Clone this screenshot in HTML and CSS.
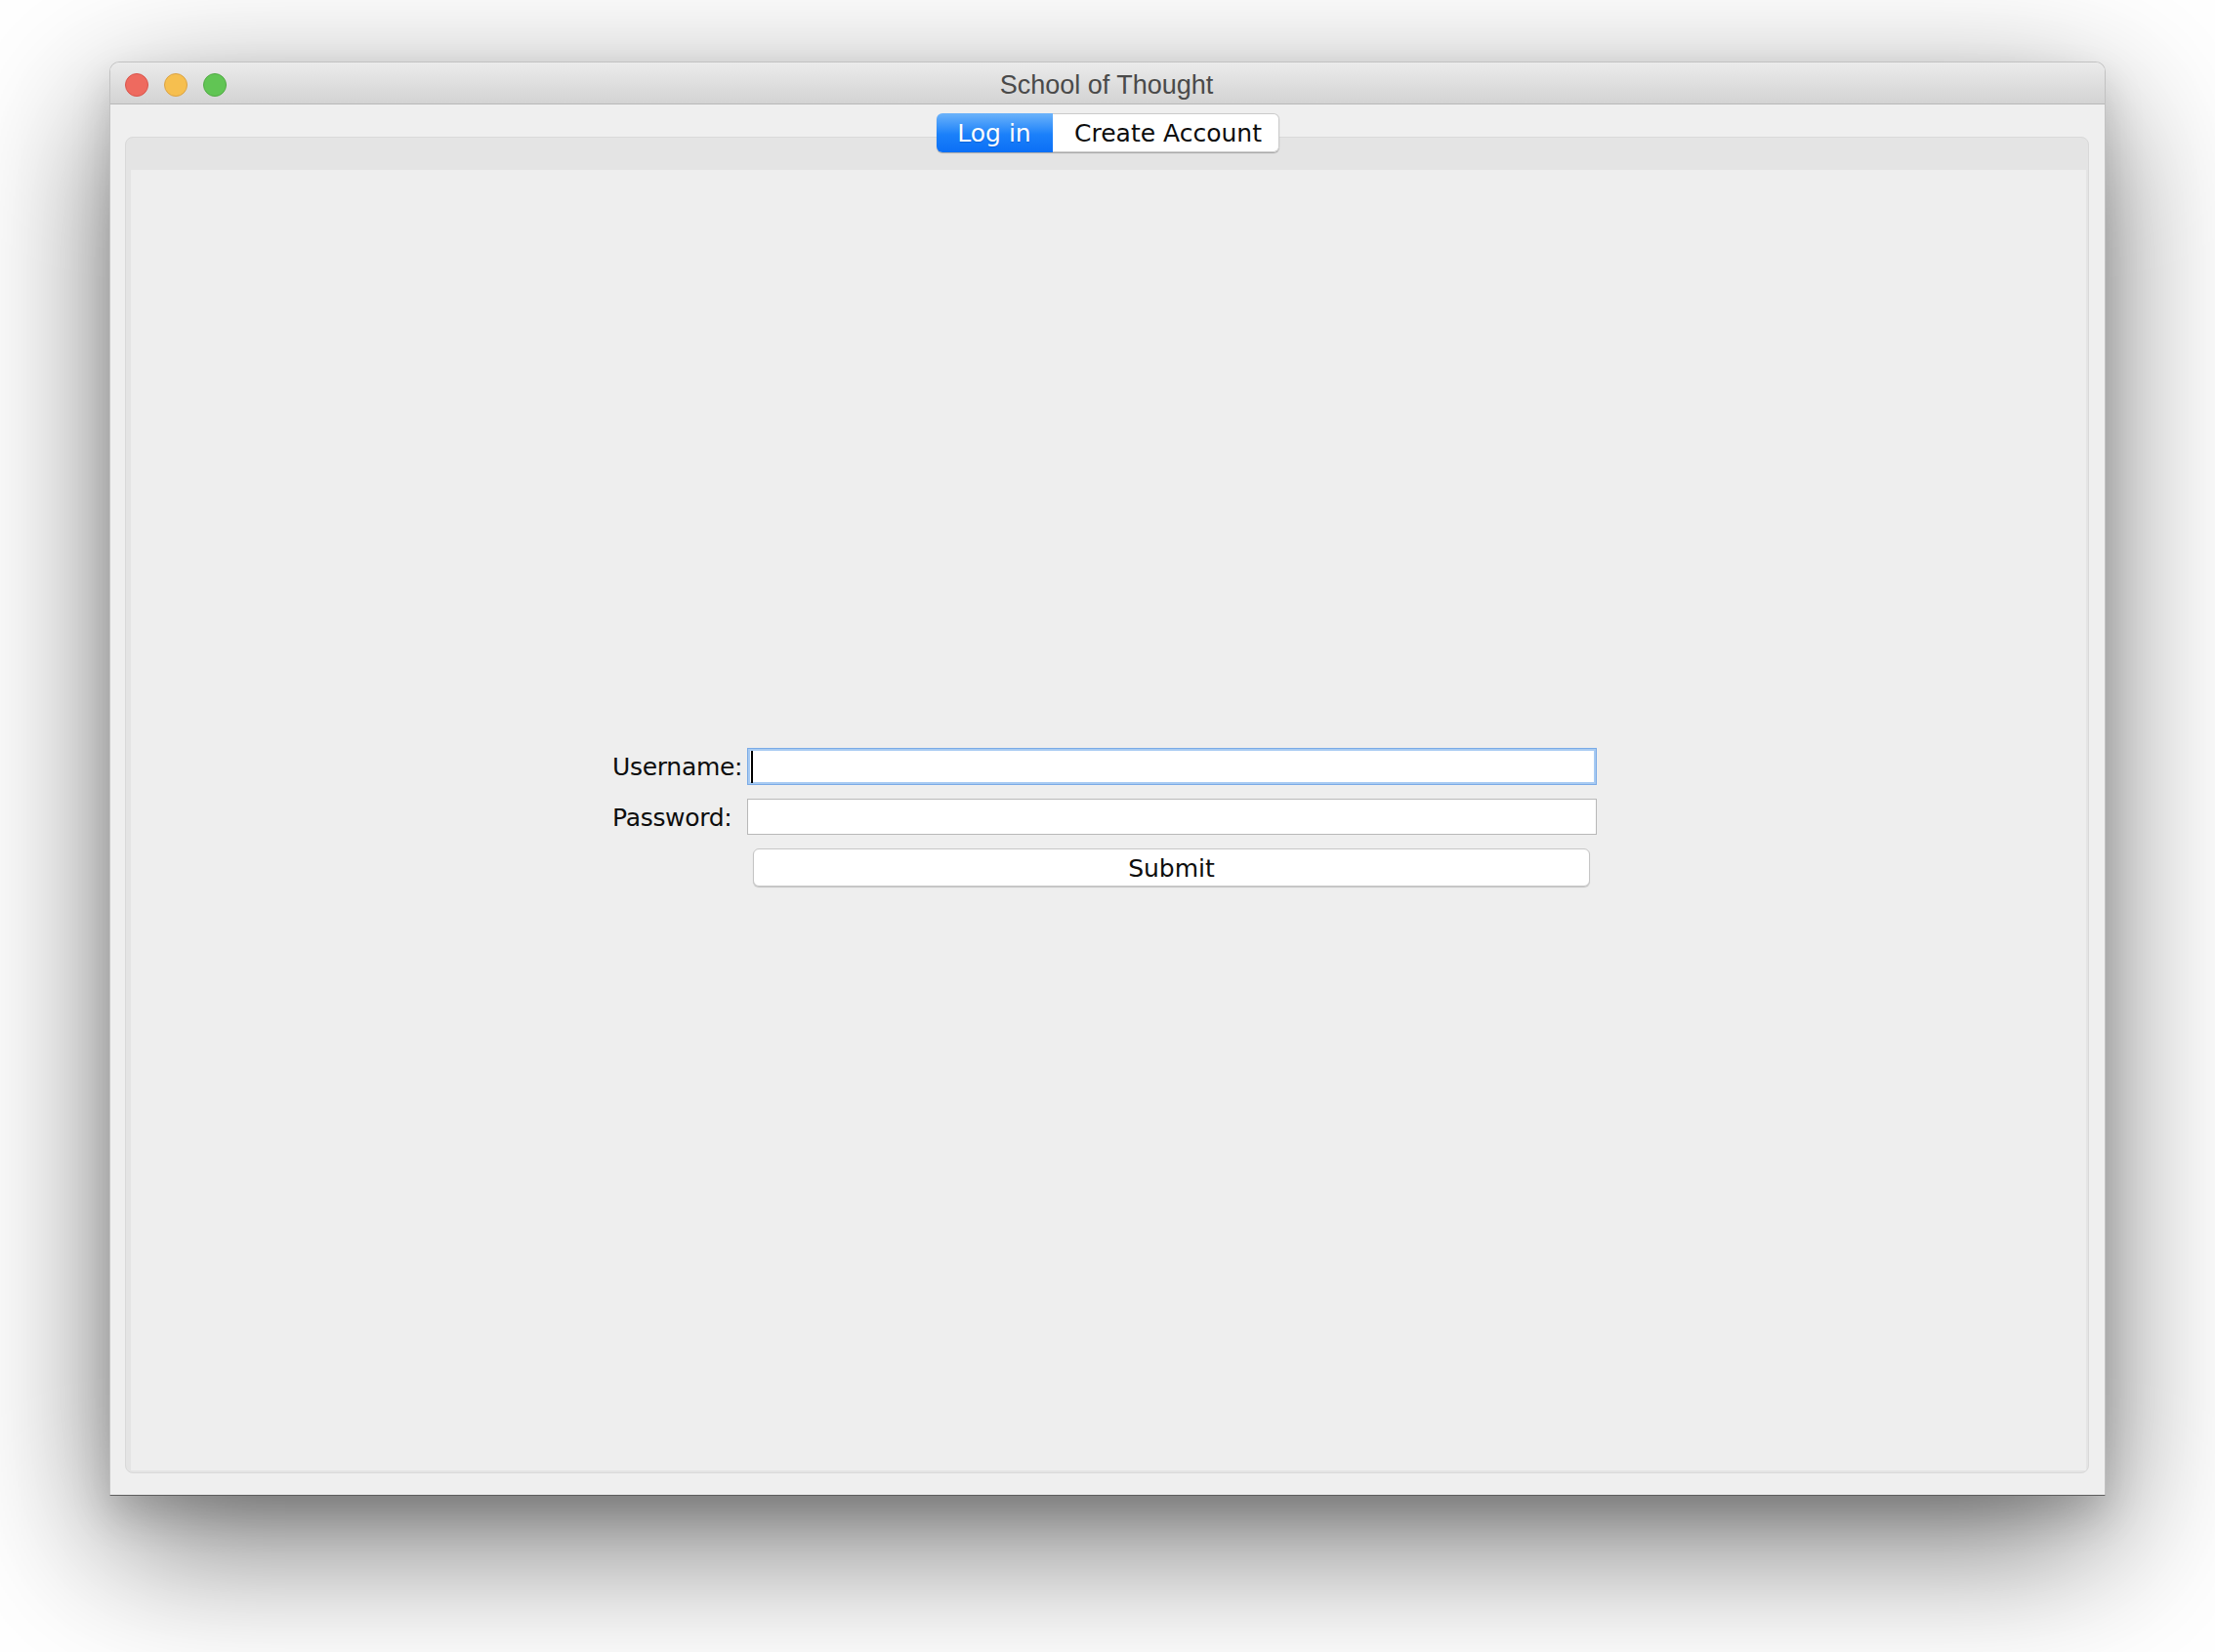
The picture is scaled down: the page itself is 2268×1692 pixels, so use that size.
FILE: index.html
```html
<!DOCTYPE html>
<html>
<head>
<meta charset="utf-8">
<title>School of Thought</title>
<link rel="stylesheet" href="styles.css">
</head>
<body>
<div class="window">
  <div class="titlebar">
    <div class="lights">
      <span class="light red"></span>
      <span class="light yellow"></span>
      <span class="light green"></span>
    </div>
    <div class="title">School of Thought</div>
    <div class="spacer"></div>
  </div>
  <div class="win-body">
    <div class="tabs">
      <div class="tab active">Log in</div>
      <div class="tab">Create Account</div>
    </div>
    <div class="panel">
      <div class="panel-content">
        <div class="form">
          <div class="label">Username:</div>
          <div class="field focused"><span class="caret"></span></div>
          <div class="label">Password:</div>
          <div class="field"></div>
          <div class="button">Submit</div>
        </div>
      </div>
    </div>
  </div>
</div>
</body>
</html>
```
FILE: styles.css
```css
html, body {
  margin: 0;
  padding: 0;
}
body {
  width: 2268px;
  height: 1692px;
  overflow: hidden;
  background: #ffffff;
  box-sizing: border-box;
  padding: 63px 0 0 112px;
  font-family: "DejaVu Sans", sans-serif;
}
.window {
  width: 2044px;
  height: 1469px;
  box-sizing: border-box;
  display: flex;
  flex-direction: column;
  background: #efefef;
  border: 1px solid #c2c2c2;
  border-bottom-color: #5e5e5e;
  border-radius: 10px 10px 0 0;
  box-shadow: 0 50px 150px rgba(0, 0, 0, 0.55), 0 20px 40px rgba(0, 0, 0, 0.15);
}
.titlebar {
  height: 43px;
  box-sizing: border-box;
  border-bottom: 1px solid #b8b8b8;
  background: linear-gradient(#ebebeb, #d3d3d3);
  border-radius: 9px 9px 0 0;
  display: grid;
  grid-template-columns: 1fr auto 1fr;
  align-items: center;
}
.lights {
  display: flex;
  gap: 16px;
  padding-left: 15px;
}
.light {
  width: 24px;
  height: 24px;
  box-sizing: border-box;
  border-radius: 50%;
  display: block;
}
.red { background: #ee6a5f; border: 1px solid #d9544b; }
.yellow { background: #f6bf4f; border: 1px solid #dba344; }
.green { background: #61c554; border: 1px solid #51aa44; }
.title {
  font-family: "Liberation Sans", Arial, sans-serif;
  font-size: 27px;
  color: #4a4a4a;
  line-height: 43px;
  padding-top: 2px;
  margin-left: -2px;
}
.win-body {
  flex: 1;
  display: flex;
  flex-direction: column;
  padding: 9px 16px 22px 15px;
  min-height: 0;
}
.tabs {
  align-self: center;
  display: flex;
  height: 40px;
  position: relative;
  z-index: 1;
  border-radius: 6px;
  box-shadow: 0 1px 1px rgba(0, 0, 0, 0.28);
  margin-left: 1px;
}
.tab {
  box-sizing: border-box;
  height: 40px;
  font-size: 25px;
  line-height: 40px;
  text-align: center;
  color: #0d0d0d;
  background: #ffffff;
  border: 1px solid #cbcbcb;
  border-left: none;
  width: 232px;
  border-radius: 0 6px 6px 0;
  padding-left: 6px;
}
.tab.active {
  width: 119px;
  color: #ffffff;
  background: linear-gradient(#6cb3fa, #1a80fa 55%, #0b6ff6);
  border: none;
  border-radius: 6px 0 0 6px;
  line-height: 42px;
  padding-left: 0;
  text-shadow: 0 1px 1px rgba(0, 40, 120, 0.25);
}
.panel {
  flex: 1;
  margin-top: -16px;
  display: flex;
  flex-direction: column;
  box-sizing: border-box;
  border: 1px solid #d9d9d9;
  border-radius: 8px;
  background: #e4e4e4;
  padding: 33px 2px 2px 5px;
  min-height: 0;
}
.panel-content {
  flex: 1;
  background: #eeeeee;
  display: flex;
  align-items: center;
  justify-content: center;
}
.form {
  display: grid;
  grid-template-columns: 130px 870px;
  column-gap: 8px;
  grid-template-rows: 38px 37px 39px;
  row-gap: 14px;
  align-items: center;
  margin: 0 8px 7px 0;
}
.label {
  font-size: 25px;
  letter-spacing: -0.3px;
  color: #0d0d0d;
  white-space: nowrap;
  padding-top: 2px;
}
.field {
  height: 100%;
  box-sizing: border-box;
  background: #ffffff;
  border: 1px solid #b8b8b8;
  display: flex;
  align-items: center;
}
.field.focused {
  border: 1px solid #7aaae6;
  box-shadow: inset 0 0 0 2px #a8cbf2;
  padding-left: 3px;
  align-items: flex-start;
  padding-top: 2px;
}
.caret {
  display: block;
  width: 2px;
  height: 33px;
  background: #000000;
}
.button {
  grid-column: 2;
  height: 39px;
  margin-top: 1px;
  box-sizing: border-box;
  margin-left: 6px;
  margin-right: 7px;
  background: #ffffff;
  border: 1px solid #c6c6c6;
  border-radius: 6px;
  box-shadow: 0 1px 1px rgba(0, 0, 0, 0.18);
  font-size: 25px;
  line-height: 39px;
  text-align: center;
  color: #0d0d0d;
}
```
